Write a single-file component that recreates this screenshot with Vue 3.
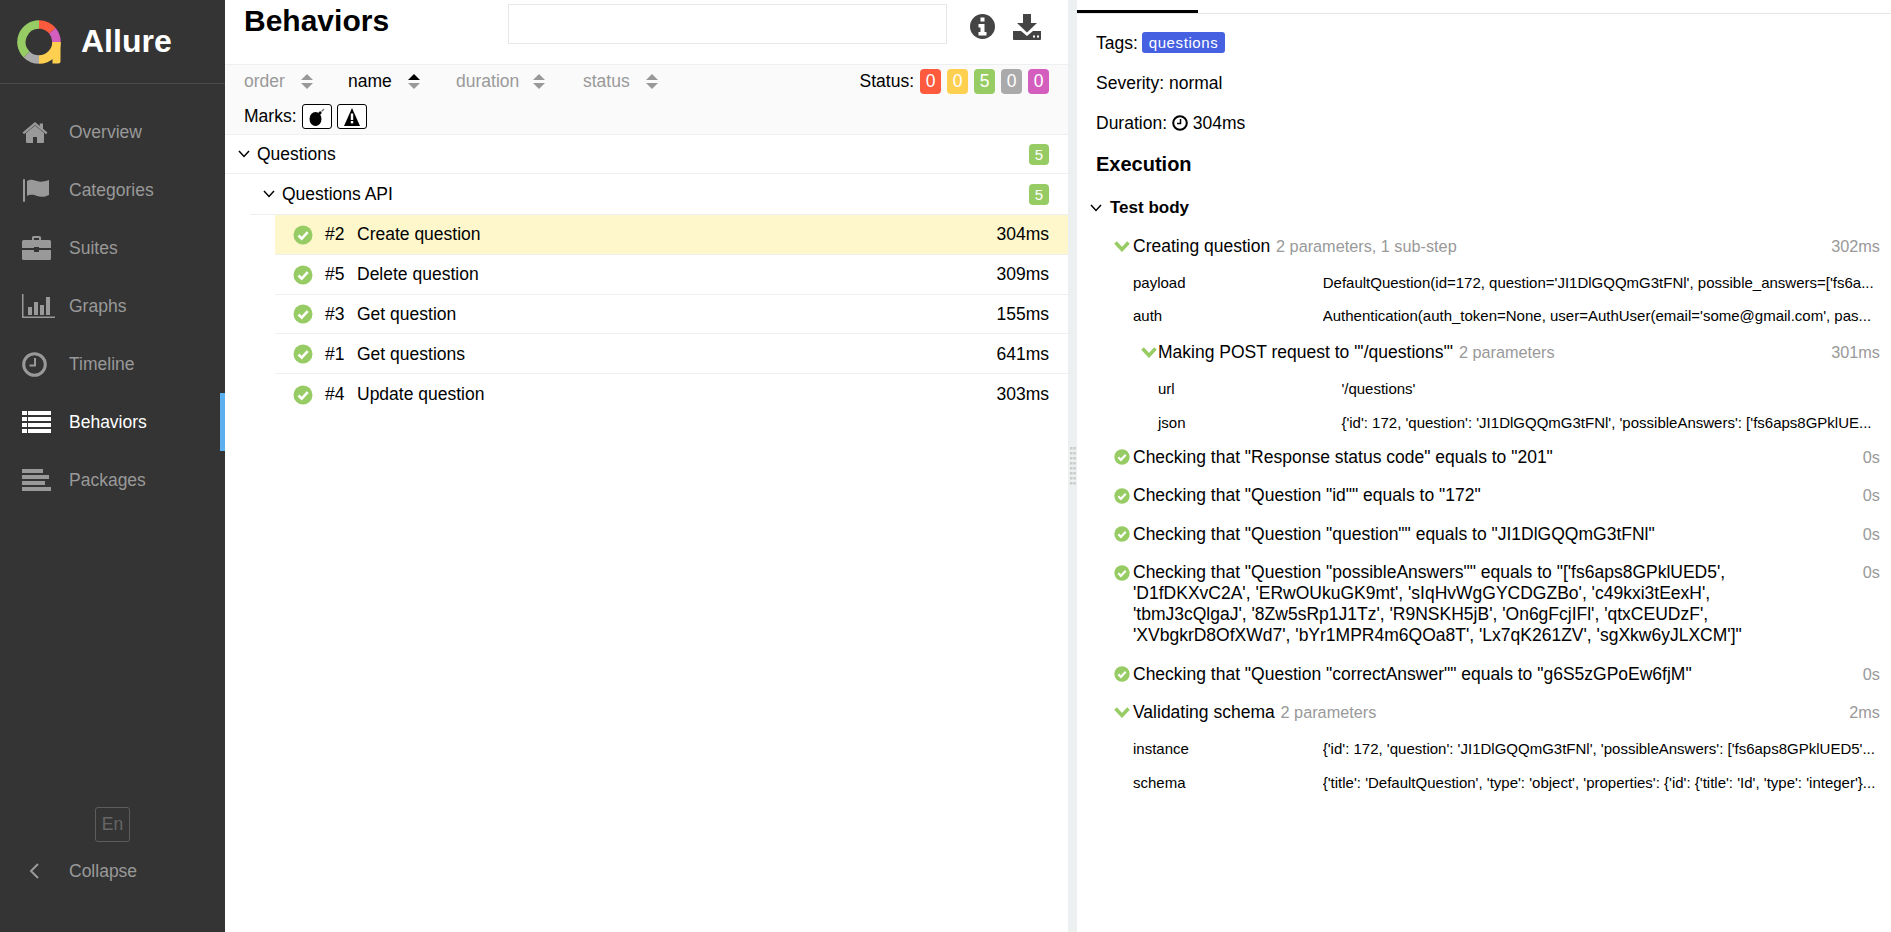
<template>
  <div class="app">
    <aside class="sidebar">
      <div class="brand">
        <svg class="logo" viewBox="0 0 44 44" width="44" height="44">
          <path d="M35.5 22h8v19a2.500 2.500 0 0 1-2.500 2.500h-5.500z" fill="#ffd050" />
          <g fill="none" stroke-width="8.500">
            <path d="M22 4.500A17.500 17.500 0 0 1 35.400 10.800" stroke="#fd5a3e" />
            <path d="M35.400 10.800A17.500 17.500 0 0 1 39.500 22" stroke="#d35ebe" />
            <path d="M39.500 22A17.500 17.500 0 0 1 22 39.500" stroke="#ffd050" />
            <path d="M22 39.500A17.500 17.500 0 0 1 9.600 34.400" stroke="#aaaaaa" />
            <path d="M9.600 34.400A17.500 17.500 0 0 1 22 4.500" stroke="#97cc64" />
          </g>
        </svg>
        <span class="brand-name">Allure</span>
      </div>

      <nav class="nav">
        <a v-for="item in navItems" :key="item.label" class="nav-item" :class="{ active: item.active }">
          <span class="nav-icon">
            <svg v-if="item.icon === 'home'" viewBox="0 0 26 21" width="26" height="21" fill="currentColor">
              <path d="M13 3.500 4 11v9a1 1 0 0 0 1 1h6v-6h4v6h6a1 1 0 0 0 1-1v-9z" />
              <path d="M13 0 0.500 10.500 2 12.200 13 3l11 9.200 1.500-1.700L21 6.700V1.500h-3.200v2.500z" />
            </svg>
            <svg v-else-if="item.icon === 'flag'" viewBox="0 0 28 24" width="28" height="24" fill="currentColor">
              <rect x="1" y="1" width="2" height="23" rx="1" />
              <path d="M5 3c4-2.500 7-1 10 0s6 1 12-1v15c-5 2.500-9 2-12 1s-6-2-10 0z" />
            </svg>
            <svg v-else-if="item.icon === 'suitcase'" viewBox="0 0 29 24" width="29" height="24" fill="currentColor">
              <path d="M10 4V1.500A1.500 1.500 0 0 1 11.500 0h6A1.500 1.500 0 0 1 19 1.500V4h-2V2h-5v2z" />
              <path d="M1.500 4h26A1.500 1.500 0 0 1 29 5.500V12H17v-1h-5v1H0V5.500A1.500 1.500 0 0 1 1.500 4z" />
              <path d="M0 14h12v2h5v-2h12v8.500a1.500 1.500 0 0 1-1.500 1.500h-26A1.500 1.500 0 0 1 0 22.500z" />
            </svg>
            <svg v-else-if="item.icon === 'graph'" viewBox="0 0 33 24" width="33" height="24" fill="currentColor">
              <path d="M0 0h1.500v22.500H33V24H0z" />
              <rect x="6" y="13" width="4" height="8" />
              <rect x="12" y="8" width="4" height="13" />
              <rect x="18" y="11" width="4" height="10" />
              <rect x="24" y="3" width="4" height="18" />
            </svg>
            <svg v-else-if="item.icon === 'clock'" viewBox="0 0 25 25" width="25" height="25" fill="none" stroke="currentColor">
              <circle cx="12.500" cy="12.500" r="10.800" stroke-width="3" />
              <path d="M13 6v7.500H7.500" stroke-width="2" />
            </svg>
            <svg v-else-if="item.icon === 'list'" viewBox="0 0 29 22" width="29" height="22" fill="currentColor">
              <rect x="0" y="0" width="5" height="4" />
              <rect x="6" y="0" width="23" height="4" />
              <rect x="0" y="6" width="5" height="4" />
              <rect x="6" y="6" width="23" height="4" />
              <rect x="0" y="12" width="5" height="4" />
              <rect x="6" y="12" width="23" height="4" />
              <rect x="0" y="18" width="5" height="4" />
              <rect x="6" y="18" width="23" height="4" />
            </svg>
            <svg v-else viewBox="0 0 29 22" width="29" height="22" fill="currentColor">
              <rect x="0" y="0" width="21" height="4" />
              <rect x="0" y="6" width="27" height="4" />
              <rect x="0" y="12" width="23" height="4" />
              <rect x="0" y="18" width="29" height="4" />
            </svg>
          </span>
          <span>{{ item.label }}</span>
        </a>
      </nav>

      <div class="sidebar-foot">
        <div class="lang">En</div>
        <div class="collapse">
          <span class="nav-icon">
            <svg viewBox="0 0 12 18" width="12" height="18" fill="none" stroke="currentColor" stroke-width="2">
              <path d="M10 2 3 9l7 7" />
            </svg>
          </span>
          <span>Collapse</span>
        </div>
      </div>
    </aside>

    <section class="left-pane">
      <header class="pane-head">
        <h2 class="pane-title">Behaviors</h2>
        <div class="search"></div>
        <div class="head-icons">
          <svg viewBox="0 0 25 25" width="25" height="25">
            <circle cx="12.500" cy="12.500" r="12.500" fill="#444" />
            <path d="M10.500 3.500h4v4h-4zM8.500 10h6v8h2v3.500h-8V18h2v-4.500h-2z" fill="#fff" />
          </svg>
          <svg viewBox="0 0 28 26" width="28" height="26" fill="#444">
            <path d="M10 0h8v9h6L14 18.500 4 9h6z" />
            <path d="M0 17h8l6 5 6-5h8v8a1 1 0 0 1-1 1H1a1 1 0 0 1-1-1z" />
            <rect x="20" y="21.500" width="2" height="2" fill="#fff" />
            <rect x="24" y="21.500" width="2" height="2" fill="#fff" />
          </svg>
        </div>
      </header>

      <div class="filters">
        <div class="filter-line">
          <span v-for="col in sortCols" :key="col.label" class="sort" :class="{ current: col.current }" :style="{ width: col.width + 'px' }">
            {{ col.label }}
            <svg class="sort-arrows" viewBox="0 0 12 15" width="12" height="15">
              <path d="M6 0 12 6H0z" :fill="col.current ? '#000' : '#999'" />
              <path d="M6 15 0 9h12z" fill="#999" />
            </svg>
          </span>
          <div class="status-filter">
            <span class="status-label">Status:</span>
            <span v-for="s in statuses" :key="s.color" class="badge" :style="{ background: s.color }">{{ s.count }}</span>
          </div>
        </div>
        <div class="marks">
          <span>Marks:</span>
          <span class="mark">
            <svg viewBox="0 0 20 20" width="20" height="20">
              <ellipse cx="8.500" cy="12" rx="6" ry="7" fill="#000" />
              <path d="M12 7l2-2" stroke="#000" stroke-width="2.500" />
              <path d="M14.500 4.500 17 2" stroke="#777" stroke-width="1.200" />
            </svg>
          </span>
          <span class="mark">
            <svg viewBox="0 0 18 18" width="18" height="18">
              <path d="M9 0 17 18H1z" fill="#000" />
              <rect x="7.800" y="5.500" width="2.400" height="6.500" fill="#fff" />
              <rect x="7.800" y="13" width="2.400" height="2.400" fill="#fff" />
            </svg>
          </span>
        </div>
      </div>

      <div class="tree">
        <div class="group-row">
          <svg class="chev" viewBox="0 0 12 8" width="12" height="8"><path d="M1 1l5 5.500L11 1" /></svg>
          <span class="group-name">Questions</span>
          <span class="badge small">5</span>
        </div>
        <div class="group-row sub">
          <svg class="chev" viewBox="0 0 12 8" width="12" height="8"><path d="M1 1l5 5.500L11 1" /></svg>
          <span class="group-name">Questions API</span>
          <span class="badge small">5</span>
        </div>
        <div v-for="t in tests" :key="t.id" class="test-row" :class="{ selected: t.selected }">
          <svg class="ok" viewBox="0 0 20 20" width="20" height="20">
            <circle cx="10" cy="10" r="9.500" fill="#97cc64" />
            <path d="M5.500 10.500l3.200 3.200 6-6.500" fill="none" stroke="#fff" stroke-width="2.600" />
          </svg>
          <span class="test-id">#{{ t.id }}</span>
          <span class="test-name">{{ t.name }}</span>
          <span class="test-time">{{ t.time }}</span>
        </div>
      </div>
    </section>

    <div class="gutter">
      <svg width="6" height="40" viewBox="0 0 6 40" fill="#ccc">
        <template v-for="n in 8" :key="n">
          <rect x="0" :y="(n - 1) * 5" width="2.500" height="2.500" />
          <rect x="3.300" :y="(n - 1) * 5" width="2.500" height="2.500" />
        </template>
      </svg>
    </div>

    <section class="right-pane">
      <div class="tabs"><div class="tab-active"></div></div>

      <div class="info">
        <div class="info-line">Tags: <span class="tag">questions</span></div>
        <div class="info-line">Severity: normal</div>
        <div class="info-line">Duration:
          <svg class="clock" viewBox="0 0 16 16" width="16" height="16" fill="none" stroke="#000">
            <circle cx="8" cy="8" r="6.800" stroke-width="2" />
            <path d="M8.500 4v4.500H5" stroke-width="1.500" />
          </svg>
          304ms
        </div>
      </div>

      <h3 class="exec-title">Execution</h3>
      <div class="body-title">
        <svg class="chev" viewBox="0 0 12 8" width="12" height="8"><path d="M1 1l5 5.500L11 1" /></svg>
        <span>Test body</span>
      </div>

      <div class="steps">
        <template v-for="step in steps" :key="step.name">
          <div class="step-row" :class="{ nested: step.nested }">
            <span class="step-mark">
              <svg v-if="step.params" class="green-chev" viewBox="0 0 16 11" width="16" height="11">
                <path d="M1.500 1.500 8 8.500l6.500-7" />
              </svg>
              <svg v-else viewBox="0 0 16 16" width="16" height="16">
                <circle cx="8" cy="8" r="7.700" fill="#97cc64" />
                <path d="M4.300 8.300l2.600 2.600 4.800-5.200" fill="none" stroke="#fff" stroke-width="2.200" />
              </svg>
            </span>
            <span class="step-name">
              {{ step.name }}
              <span v-if="step.meta" class="step-meta">{{ step.meta }}</span>
            </span>
            <span class="step-time">{{ step.time }}</span>
          </div>
          <div v-if="step.params" class="params" :class="{ nested: step.nested }">
            <div v-for="p in step.params" :key="p.key" class="param">
              <span class="param-key">{{ p.key }}</span>
              <span class="param-value">{{ p.value }}</span>
            </div>
          </div>
        </template>
      </div>
    </section>
  </div>
</template>

<script setup>
const navItems = [
  { label: 'Overview', icon: 'home' },
  { label: 'Categories', icon: 'flag' },
  { label: 'Suites', icon: 'suitcase' },
  { label: 'Graphs', icon: 'graph' },
  { label: 'Timeline', icon: 'clock' },
  { label: 'Behaviors', icon: 'list', active: true },
  { label: 'Packages', icon: 'packages' },
];

const sortCols = [
  { label: 'order', width: 104 },
  { label: 'name', width: 108, current: true },
  { label: 'duration', width: 127 },
  { label: 'status', width: 90 },
];

const statuses = [
  { color: '#fd5a3e', count: 0 },
  { color: '#ffd050', count: 0 },
  { color: '#97cc64', count: 5 },
  { color: '#aaaaaa', count: 0 },
  { color: '#d35ebe', count: 0 },
];

const tests = [
  { id: 2, name: 'Create question', time: '304ms', selected: true },
  { id: 5, name: 'Delete question', time: '309ms' },
  { id: 3, name: 'Get question', time: '155ms' },
  { id: 1, name: 'Get questions', time: '641ms' },
  { id: 4, name: 'Update question', time: '303ms' },
];

const steps = [
  {
    name: 'Creating question',
    meta: '2 parameters, 1 sub-step',
    time: '302ms',
    params: [
      { key: 'payload', value: "DefaultQuestion(id=172, question='JI1DlGQQmG3tFNl', possible_answers=['fs6a..." },
      { key: 'auth', value: "Authentication(auth_token=None, user=AuthUser(email='some@gmail.com', pas..." },
    ],
  },
  {
    name: 'Making POST request to "\'/questions\'"',
    meta: '2 parameters',
    time: '301ms',
    nested: true,
    params: [
      { key: 'url', value: "'/questions'" },
      { key: 'json', value: "{'id': 172, 'question': 'JI1DlGQQmG3tFNl', 'possibleAnswers': ['fs6aps8GPklUE..." },
    ],
  },
  { name: 'Checking that "Response status code" equals to "201"', time: '0s' },
  { name: 'Checking that "Question "id"" equals to "172"', time: '0s' },
  { name: 'Checking that "Question "question"" equals to "JI1DlGQQmG3tFNl"', time: '0s' },
  {
    name: "Checking that \"Question \"possibleAnswers\"\" equals to \"['fs6aps8GPklUED5', 'D1fDKXvC2A', 'ERwOUkuGK9mt', 'sIqHvWgGYCDGZBo', 'c49kxi3tEexH', 'tbmJ3cQlgaJ', '8Zw5sRp1J1Tz', 'R9NSKH5jB', 'On6gFcjIFl', 'qtxCEUDzF', 'XVbgkrD8OfXWd7', 'bYr1MPR4m6QOa8T', 'Lx7qK261ZV', 'sgXkw6yJLXCM']\"",
    time: '0s',
  },
  { name: 'Checking that "Question "correctAnswer"" equals to "g6S5zGPoEw6fjM"', time: '0s' },
  {
    name: 'Validating schema',
    meta: '2 parameters',
    time: '2ms',
    params: [
      { key: 'instance', value: "{'id': 172, 'question': 'JI1DlGQQmG3tFNl', 'possibleAnswers': ['fs6aps8GPklUED5'..." },
      { key: 'schema', value: "{'title': 'DefaultQuestion', 'type': 'object', 'properties': {'id': {'title': 'Id', 'type': 'integer'}..." },
    ],
  },
];
</script>

<style>
html,
body {
  margin: 0;
  overflow: hidden;
  background: #fff;
}
</style>

<style scoped>
.app {
  display: flex;
  height: 932px;
  font-family: "Liberation Sans", Arial, sans-serif;
  font-size: 17.5px;
  color: #000;
  overflow: hidden;
}

.sidebar {
  width: 225px;
  flex: none;
  display: flex;
  flex-direction: column;
  background: #343434;
  color: #999;
  font-size: 17.5px;
}

.brand {
  height: 83px;
  display: flex;
  align-items: center;
  padding-left: 17px;
  gap: 20px;
  border-bottom: 1px solid #4a4a4a;
  box-sizing: content-box;
}

.logo {
  margin-top: 1px;
}

.brand-name {
  color: #fff;
  font-size: 32px;
  font-weight: 700;
}

.nav {
  padding-top: 19px;
}

.nav-item {
  height: 58px;
  display: flex;
  align-items: center;
  padding-left: 22px;
  border-right: 5px solid transparent;
}

.nav-item.active {
  color: #fff;
  border-right-color: #5bb0f0;
}

.nav-icon {
  width: 47px;
  flex: none;
  display: flex;
  align-items: center;
}

.sidebar-foot {
  margin-top: auto;
  padding-bottom: 32px;
}

.lang {
  width: 35px;
  height: 35px;
  margin-left: 95px;
  box-sizing: border-box;
  border: 1px solid #5c5c5c;
  border-radius: 3px;
  color: #666;
  font-size: 17.500px;
  line-height: 33px;
  text-align: center;
}

.collapse {
  height: 58px;
  display: flex;
  align-items: center;
  padding-left: 22px;
  color: #999;
}

.collapse .nav-icon {
  padding-left: 6px;
  width: 41px;
}

.left-pane {
  width: 843px;
  flex: none;
}

.pane-head {
  height: 65px;
  box-sizing: border-box;
  display: grid;
  grid-template-columns: 264px 439px auto;
  padding-left: 19px;
  border-bottom: 1px solid #ecf0f1;
}

.pane-title {
  margin: 0;
  font-size: 30px;
  font-weight: 700;
  line-height: 42px;
}

.search {
  height: 40px;
  margin-top: 4px;
  box-sizing: border-box;
  border: 1px solid #e4e8e9;
}

.head-icons {
  display: flex;
  align-items: flex-start;
  gap: 18px;
  padding: 14px 0 0 23px;
}

.filters {
  height: 70px;
  box-sizing: border-box;
  background: #fafafa;
  border-bottom: 1px solid #ecf0f1;
  padding-left: 19px;
}

.filter-line {
  height: 33px;
  display: flex;
  align-items: center;
}

.sort {
  flex: none;
  display: flex;
  align-items: center;
  color: #999;
}

.sort.current {
  color: #000;
}

.sort-arrows {
  margin-left: 16px;
}

.sort:nth-child(3) .sort-arrows {
  margin-left: 14px;
}

.status-filter {
  margin-left: auto;
  display: flex;
  align-items: center;
  gap: 6px;
  padding-right: 19px;
}

.badge {
  width: 21px;
  height: 25px;
  border-radius: 4px;
  color: #fff;
  text-align: center;
  line-height: 25px;
}

.badge.small {
  height: 21px;
  width: 20px;
  line-height: 21px;
  font-size: 15px;
  background: #97cc64;
}

.marks {
  display: flex;
  align-items: center;
  gap: 5px;
  height: 25px;
  margin-top: 6px;
}

.mark {
  width: 30px;
  height: 25px;
  box-sizing: border-box;
  border: 1px solid #000;
  border-radius: 3px;
  display: flex;
  align-items: center;
  justify-content: center;
  background: #fff;
}

.group-row {
  height: 39px;
  box-sizing: border-box;
  display: flex;
  align-items: center;
  padding: 0 19px 0 13px;
  border-bottom: 1px solid #ecf0f1;
}

.group-row.sub {
  height: 41px;
  margin-left: 25px;
  padding-left: 13px;
}

.chev {
  flex: none;
  fill: none;
  stroke: #000;
  stroke-width: 1.500;
}

.group-name {
  margin-left: 7px;
  flex: 1;
}

.test-row {
  height: 39.800px;
  box-sizing: border-box;
  margin-left: 50px;
  display: flex;
  align-items: center;
  padding: 1px 19px 0 18px;
  border-bottom: 1px solid #ecf0f1;
}

.test-row:last-child {
  border-bottom: none;
}

.test-row.selected {
  background: #fdf7cb;
}

.test-id {
  margin-left: 12px;
  width: 32px;
}

.test-name {
  flex: 1;
}

.gutter {
  width: 9px;
  flex: none;
  background: #ecf0f1;
  display: flex;
  justify-content: center;
  padding-top: 447px;
  box-sizing: border-box;
}

.right-pane {
  flex: 1;
  min-width: 0;
  padding-right: 11px;
}

.tabs {
  margin-right: -11px;
  height: 14px;
  box-sizing: border-box;
  border-bottom: 1px solid #e4e8e9;
}

.tab-active {
  width: 121px;
  height: 13px;
  box-sizing: border-box;
  border-bottom: 3px solid #000;
}

.info {
  padding: 9px 0 0 19px;
}

.info-line {
  height: 40px;
  line-height: 40px;
  white-space: nowrap;
}

.tag {
  display: inline-block;
  height: 21px;
  line-height: 21px;
  padding: 0 7px;
  margin-left: -1px;
  background: #4560e0;
  border-radius: 3px;
  color: #fff;
  font-size: 15px;
  letter-spacing: 0.6px;
  vertical-align: 1px;
}

.clock {
  vertical-align: -2px;
}

.exec-title {
  margin: 0;
  padding-left: 19px;
  font-size: 20px;
  font-weight: 700;
  line-height: 42px;
}

.body-title {
  height: 46px;
  display: flex;
  align-items: center;
  gap: 8px;
  padding-left: 13px;
  font-size: 17px;
  font-weight: 700;
}

.steps {
  margin-top: -4px;
}

.step-row {
  display: flex;
  align-items: flex-start;
  padding: 8.750px 0;
  line-height: 21px;
}

.step-mark {
  width: 19px;
  margin-left: 37px;
  flex: none;
  height: 21px;
  display: flex;
  align-items: center;
}

.step-row.nested .step-mark {
  margin-left: 64px;
  width: 17px;
}

.green-chev {
  fill: none;
  stroke: #97cc64;
  stroke-width: 3.500;
}

.step-name {
  flex: 1;
  min-width: 0;
  padding-right: 85px;
}

.step-meta {
  margin-left: 1px;
  color: #999;
  font-size: 16.250px;
}

.step-time {
  flex: none;
  color: #999;
  font-size: 16.250px;
}

.params {
  padding-left: 56px;
  margin-bottom: 1px;
  font-size: 15px;
}

.params.nested {
  padding-left: 81px;
  margin-bottom: -1px;
}

.param {
  height: 33.500px;
  display: grid;
  grid-template-columns: 25.4% 1fr;
  align-items: center;
  white-space: nowrap;
}

.param-value {
  overflow: hidden;
}
</style>
